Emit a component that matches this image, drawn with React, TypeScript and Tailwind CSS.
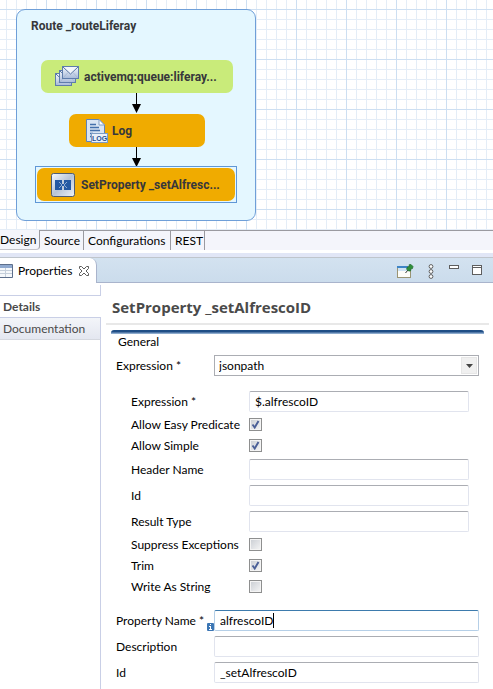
import React, { useState } from "react";

const textInput =
  "h-[21px] w-full rounded-[2px] border border-[#e1e4ee] border-t-[#abadb3] bg-white px-[5px] text-[12px] leading-4 text-black outline-none";

function CheckField({ label, initial }: { label: string; initial: boolean }) {
  const [on, setOn] = useState(initial);
  return (
    <label className="grid h-4 grid-cols-[118px_1fr] items-center pb-px leading-[15px] whitespace-nowrap">
      <span>{label}</span>
      <span className="relative block h-[13px] w-[13px]">
        <input
          type="checkbox"
          checked={on}
          onChange={() => setOn(!on)}
          className="block h-[13px] w-[13px] appearance-none border border-[#8e8f8f] bg-linear-to-br from-[#c9cdd3] to-[#f6f6f6] shadow-[inset_0_0_0_1px_#f4f4f4]"
        />
        {on && (
          <svg viewBox="0 0 13 13" className="pointer-events-none absolute inset-0 h-[13px] w-[13px]" fill="none">
            <path d="M3.5 6.5 L5.7 9.5 L9.5 3" stroke="#4a5f97" strokeWidth="1.9" />
          </svg>
        )}
      </span>
    </label>
  );
}

function InnerField({ label, value = "" }: { label: string; value?: string }) {
  return (
    <label className="grid grid-cols-[118px_1fr] items-center whitespace-nowrap">
      <span>{label}</span>
      <input type="text" defaultValue={value} className={textInput} />
    </label>
  );
}

function Envelope({ x, y }: { x: number; y: number }) {
  return (
    <g transform={`translate(${x} ${y})`}>
      <rect x="0.5" y="0.5" width="16" height="12" fill="url(#mail)" stroke="#5f7dac" />
      <path d="M1 1 L8.5 8 L16 1" fill="#f3f6fb" stroke="#5573a3" />
      <path d="M1 12 L6 6.5 M16 12 L11 6.5" stroke="#a5b6d2" strokeWidth="0.8" />
    </g>
  );
}

function QueueIcon() {
  return (
    <svg width="25" height="21" viewBox="0 0 25 21" fill="none">
      <defs>
        <linearGradient id="mail" x1="0" y1="0" x2="0" y2="1">
          <stop offset="0" stopColor="#f4f7fc" />
          <stop offset="1" stopColor="#a9bbda" />
        </linearGradient>
      </defs>
      <Envelope x={0} y={7} />
      <Envelope x={4} y={4} />
      <Envelope x={7} y={0} />
    </svg>
  );
}

function LogIcon() {
  return (
    <svg width="23" height="26" viewBox="0 0 23 26" fill="none">
      <path d="M1.5 1.5 H14 L19.5 7 V23.5 H1.5 Z" fill="#d9e5f3" stroke="#5f83b5" />
      <path d="M14 1.5 V7 H19.5 Z" fill="#fff" stroke="#7f9cc5" />
      <path d="M5 6.5 H11 M5 9.5 H14 M5 12.5 H15 M5 15.5 H8 M5 18.5 H7" stroke="#4370ab" strokeWidth="1.4" />
      <rect x="6.5" y="15.5" width="16" height="9" fill="#eaf1f9" stroke="#7d9cc4" />
      <text x="14.5" y="23" textAnchor="middle" fontSize="7" fontWeight="bold" fontFamily="Liberation Sans, sans-serif" fill="#1f4f93">
        LOG
      </text>
    </svg>
  );
}

function PropertyIcon() {
  return (
    <svg width="24" height="24" viewBox="0 0 24 24" fill="none">
      <defs>
        <linearGradient id="tile" x1="0" y1="0" x2="1" y2="1">
          <stop offset="0" stopColor="#f7fafd" />
          <stop offset="0.5" stopColor="#b7c4d6" />
          <stop offset="1" stopColor="#eef2f7" />
        </linearGradient>
      </defs>
      <rect x="0.5" y="0.5" width="23" height="23" rx="2" fill="url(#tile)" stroke="#4e5d73" />
      <rect x="4" y="7" width="7" height="10" fill="#2459a3" />
      <rect x="13" y="7" width="7" height="10" fill="#2459a3" />
      <path d="M8 9 L11 12 L8 15 M16 9 L13 12 L16 15" stroke="#a9c1e2" strokeWidth="0.8" />
      <path d="M11 11 H13 V13 H11 Z" fill="#2459a3" />
    </svg>
  );
}

function Arrow({ className }: { className: string }) {
  return (
    <svg width="9" height="21" viewBox="0 0 9 21" className={"absolute " + className}>
      <path d="M4 0 H5 V12 H4 Z M0 11 H9 L4.5 20 Z" fill="#000" />
    </svg>
  );
}

function Diagram() {
  const node = "absolute flex h-[33px] items-center rounded-[7px] ";
  return (
    <section
      aria-label="Route diagram"
      className="relative h-[230px] overflow-hidden bg-white bg-[linear-gradient(to_right,#cddff2_1px,transparent_1px),linear-gradient(to_bottom,#cddff2_1px,transparent_1px),linear-gradient(to_right,#e4edf7_1px,transparent_1px),linear-gradient(to_bottom,#e4edf7_1px,transparent_1px)] bg-size-[50px_50px,50px_50px,10px_10px,10px_10px] bg-position-[46px_9px,46px_9px,6px_9px,6px_9px] font-[Roboto,Arial,sans-serif] text-[12px] font-bold text-[#37373b]"
    >
      <div className="absolute top-[9px] left-4 h-[212px] w-[240px] rounded-[9px] border border-[#6f9fd8] bg-[#e4f7ff]">
        <h2 className="absolute top-2 left-[14px] whitespace-nowrap leading-4">Route _routeLiferay</h2>
        <div className={node + "top-[50px] left-6 w-[192px] gap-1 bg-[#c9eb7a] pl-[14px]"}>
          <QueueIcon />
          <span className="whitespace-nowrap">activemq:queue:liferay...</span>
        </div>
        <Arrow className="top-[83px] left-[115px]" />
        <div className={node + "top-[104px] left-[52px] w-[136px] gap-1 bg-[#f0ab00] pl-4"}>
          <LogIcon />
          <span>Log</span>
        </div>
        <Arrow className="top-[137px] left-[115px]" />
        <div className="absolute top-[156px] left-[18px] w-[202px] border border-[#5f97d6] p-px">
          <div className="flex h-[33px] items-center gap-[6px] rounded-[7px] bg-[#f0ab00] pl-[14px]">
            <PropertyIcon />
            <span className="whitespace-nowrap">SetProperty _setAlfresc...</span>
          </div>
        </div>
      </div>
    </section>
  );
}

function EditorTabs() {
  const tab = "h-5 border-t border-r border-[#9a9aa0] px-1 text-left leading-[18px]";
  return (
    <nav className="flex h-5 bg-[#f4f5fb] text-black">
      <button className="h-5 w-10 rounded-br-[4px] border-r border-b border-r-[#9a9aa0] border-b-[#c4c4ca] text-left leading-[19px]">
        Design
      </button>
      <button className={tab + " w-11"}>Source</button>
      <button className={tab + " w-[87px]"}>Configurations</button>
      <button className={tab + " w-[34px]"}>REST</button>
      <div className="flex-1 border-t border-[#9a9aa0]" />
    </nav>
  );
}

function ViewHeader() {
  return (
    <header className="flex h-[26px] justify-between border-t border-b border-t-[#bfc5cc] border-b-[#a9b4cc] bg-linear-to-b from-[#d3e2f0] to-[#cbdcec]">
      <div className="-mb-px flex w-[97px] items-center rounded-tr-[7px] border-r border-[#a9b4cc] bg-white text-black">
        <svg width="13" height="14" viewBox="0 0 13 14" className="shrink-0">
          <path d="M0 0.5 H12.5 V13.5 H0" fill="#f5f8fb" stroke="#5d6f8c" />
          <path d="M0 1 H12 V4 H0 Z" fill="#8fa9cf" />
          <path d="M0 6.5 H12 M0 9.5 H12 M5.5 4 V13" stroke="#c5cfdb" />
        </svg>
        <span className="ml-[5px] w-[54px] whitespace-nowrap">Properties</span>
        <button aria-label="Close" className="ml-[6px]">
          <svg width="12" height="12" viewBox="0 0 12 12" fill="none">
            <path
              d="M1.5 1.5 H3.5 L6 4 L8.5 1.5 H10.5 V3.5 L8 6 L10.5 8.5 V10.5 H8.5 L6 8 L3.5 10.5 H1.5 V8.5 L4 6 L1.5 3.5 Z"
              stroke="#5c5c5c"
            />
          </svg>
        </button>
      </div>
      <div className="flex items-start pt-[6px] pr-[11px]">
        <button aria-label="Pin view" className="mr-[14px]">
          <svg width="17" height="15" viewBox="0 0 17 15" fill="none">
            <rect x="0.5" y="2.5" width="13" height="11" fill="#fdfdf8" stroke="#9a9474" />
            <path d="M0 2 H11 V4 H0 Z" fill="#3f85c6" />
            <path d="M1 4 H13 V7 H1 Z" fill="#cfe3f4" />
            <path d="M8.5 9 L11 6" stroke="#333" />
            <path d="M9.5 5 L10.5 3 L12.5 2.5 L12 0.8 L14 0.5 L16 2.5 L15.5 4.5 L14 4.8 L13.5 7 L11.5 7 Z" fill="#2f8f3a" stroke="#1e6b2c" strokeWidth="0.7" />
          </svg>
        </button>
        <button aria-label="View menu" className="mr-[15px]">
          <svg width="6" height="15" viewBox="0 0 6 15" fill="#fff" stroke="#5e5e5e">
            <circle cx="3" cy="2.5" r="1.9" />
            <circle cx="3" cy="7.5" r="1.9" />
            <circle cx="3" cy="12.5" r="1.9" />
          </svg>
        </button>
        <button aria-label="Minimize" className="mt-px mr-[13px]">
          <svg width="10" height="4" viewBox="0 0 10 4">
            <rect x="0.5" y="0.5" width="9" height="3" fill="#fff" stroke="#5e5e5e" />
          </svg>
        </button>
        <button aria-label="Maximize" className="mt-px">
          <svg width="10" height="10" viewBox="0 0 10 10">
            <rect x="0.5" y="0.5" width="9" height="9" fill="#fff" stroke="#5e5e5e" />
            <path d="M0 2.5 H10" stroke="#5e5e5e" />
          </svg>
        </button>
      </div>
    </header>
  );
}

function Sidebar() {
  return (
    <nav className="flex w-[101px] shrink-0 flex-col pt-[2px] text-[#4a4a4a]">
      <div className="h-[11px] border-r border-b border-[#c9cfe6]" />
      <button className="h-[21px] pl-[3px] text-left font-bold leading-[20px]">Details</button>
      <button className="h-[23px] border-y border-r border-[#c9cfe6] border-b-[#d5d8df] bg-linear-to-b from-[#f3f5f9] to-[#e4e7f0] pl-[3px] text-left leading-[20px]">
        Documentation
      </button>
      <div className="flex-1 border-r border-[#c9cfe6]" />
    </nav>
  );
}

function OuterField({ label, children }: { label: string; children: React.ReactNode }) {
  return (
    <label className="grid grid-cols-[98px_1fr] items-center whitespace-nowrap">
      <span>{label}</span>
      <span className="relative block">{children}</span>
    </label>
  );
}

export default function App() {
  return (
    <main className="min-h-screen bg-white font-[Lato,'Segoe_UI',sans-serif] text-[12px] text-black">
      <Diagram />
      <EditorTabs />
      <div className="h-[3px] bg-white" />
      <div className="h-1 bg-[#e1e6f6]" />
      <ViewHeader />
      <div className="flex min-h-[406px]">
        <Sidebar />
        <section className="min-w-0 flex-1 pb-[6px]">
          <h1 className="mt-[13px] mb-[5px] ml-[11px] font-['Open_Sans','Segoe_UI',sans-serif] text-[15px] font-bold leading-[22px] text-[#4a4a4a]">
            SetProperty _setAlfrescoID
          </h1>
          <div className="mr-1 ml-[5px] h-[2px] bg-[#e8e8e8]" />
          <div className="mt-[5px] mr-[9px] ml-[10px] h-1 rounded-t-[3px] bg-linear-to-b from-[#1f4e86] from-40% to-[#a9c3df]" />
          <h2 className="ml-[17px] h-[21px] leading-4">General</h2>
          <form className="mr-[14px] ml-[15px] flex flex-col gap-[15px]">
            <OuterField label="Expression *">
              <select className="block h-[21px] w-full appearance-none border border-[#abadb3] bg-white pl-1 text-[12px] leading-4 outline-none">
                <option>jsonpath</option>
              </select>
              <span className="pointer-events-none absolute top-[2px] right-[2px] flex h-[17px] w-4 items-center justify-center border border-[#e6e6e6] bg-[#f0f0f0]">
                <svg width="7" height="4" viewBox="0 0 7 4">
                  <path d="M0 0 H7 L3.5 4 Z" fill="#444" />
                </svg>
              </span>
            </OuterField>
            <div className="mr-[10px] ml-[15px] flex flex-col gap-[5px]">
              <InnerField label="Expression *" value="$.alfrescoID" />
              <CheckField label="Allow Easy Predicate" initial={true} />
              <CheckField label="Allow Simple" initial={true} />
              <InnerField label="Header Name" />
              <InnerField label="Id" />
              <InnerField label="Result Type" />
              <CheckField label="Suppress Exceptions" initial={false} />
              <CheckField label="Trim" initial={true} />
              <CheckField label="Write As String" initial={false} />
            </div>
            <div className="flex flex-col gap-[5px]">
              <OuterField label="Property Name *">
                <input
                  type="text"
                  defaultValue="alfrescoID"
                  className="block h-[21px] w-full rounded-[2px] border border-[#b5cfe7] border-t-[#3d7bad] bg-white px-[5px] text-[12px] leading-4 outline-none"
                />
                <span aria-hidden="true" className="absolute top-[3px] left-[59px] h-[15px] w-px bg-black" />
                <svg width="7" height="8" viewBox="0 0 7 8" className="absolute top-[13px] -left-[7px]">
                  <rect width="7" height="8" rx="1" fill="#3c76b4" />
                  <path d="M3 1 H4 V2 H3 Z M2 3 H4 V6 H5 V7 H2 V6 H3 V4 H2 Z" fill="#fff" />
                </svg>
              </OuterField>
              <OuterField label="Description">
                <input type="text" className={"block " + textInput} />
              </OuterField>
              <OuterField label="Id">
                <input type="text" defaultValue="_setAlfrescoID" className={"block " + textInput} />
              </OuterField>
            </div>
          </form>
        </section>
      </div>
    </main>
  );
}
